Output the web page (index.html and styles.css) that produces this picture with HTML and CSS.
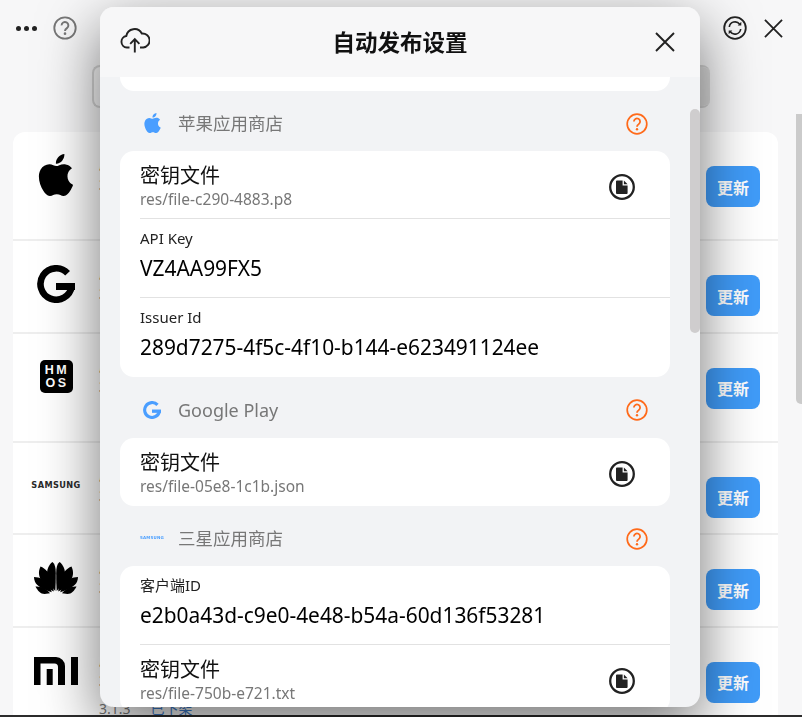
FILE: index.html
```html
<!DOCTYPE html>
<html lang="zh-CN">
<head>
<meta charset="utf-8">
<title>自动发布设置</title>
<link rel="stylesheet" href="styles.css">
</head>
<body>
<svg class="defs" width="0" height="0" aria-hidden="true">
  <defs>
    <symbol id="apple" viewBox="2 0 20 24"><path d="M12.152 6.896c-.948 0-2.415-1.078-3.96-1.04-2.04.027-3.91 1.183-4.961 3.014-2.117 3.675-.546 9.103 1.519 12.09 1.013 1.454 2.208 3.09 3.792 3.039 1.52-.065 2.09-.987 3.935-.987 1.831 0 2.35.987 3.96.948 1.637-.026 2.676-1.48 3.676-2.948 1.156-1.688 1.636-3.325 1.662-3.415-.039-.013-3.182-1.221-3.22-4.857-.026-3.04 2.48-4.494 2.597-4.559-1.429-2.09-3.623-2.324-4.39-2.376-2-.156-3.675 1.09-4.61 1.09zM15.53 3.83c.843-1.012 1.4-2.427 1.245-3.83-1.207.052-2.662.805-3.532 1.818-.78.896-1.454 2.338-1.273 3.714 1.338.104 2.715-.688 3.559-1.701"/></symbol>
    <symbol id="gee" viewBox="0 0 38 38"><path d="M30.6 8.2A15.7 15.7 0 1 0 34.7 21.5" fill="none" stroke="currentColor" stroke-width="6.6"/><path d="M19 18h19v7H19z"/></symbol>
    <symbol id="help" viewBox="0 0 22 22"><circle cx="11" cy="11" r="9.8" fill="none" stroke="currentColor" stroke-width="1.7"/><path d="M7.9 8.6a3.1 3.1 0 1 1 4.9 2.5c-1.1.8-1.8 1.3-1.8 2.6" fill="none" stroke="currentColor" stroke-width="1.8"/><circle cx="11" cy="16.2" r="1.2" fill="currentColor"/></symbol>
    <symbol id="file" viewBox="0 0 26 26"><circle cx="13" cy="13" r="11.8" fill="none" stroke="#222" stroke-width="2.3"/><path d="M8 6.500h5.600v5h5V19a1 1 0 0 1-1 1H8a1 1 0 0 1-1-1V7.500a1 1 0 0 1 1-1z" fill="#222"/><path d="M14.900 6.500l3.700 3.800h-3.700z" fill="#222"/></symbol>
    <symbol id="cross" viewBox="0 0 20 20"><path d="M1 1l18 18M19 1L1 19" fill="none" stroke="#222" stroke-width="1.9"/></symbol>
  </defs>
</svg>

<div class="app">
  <header class="topbar">
    <div class="topleft">
      <span class="dots"><i></i><i></i><i></i></span>
      <svg class="tophelp"><use href="#help"/></svg>
    </div>
    <div class="topright">
      <svg class="refresh" viewBox="0 0 24 24"><circle cx="12" cy="12" r="10.800" fill="none" stroke="#222" stroke-width="1.800"/><path d="M6.300 11a5.800 5.800 0 0 1 10.400-2.800M17.700 13a5.800 5.800 0 0 1-10.400 2.800" fill="none" stroke="#222" stroke-width="1.600"/><path d="M18.300 5.800v3.600h-3.600zM5.700 18.200v-3.600h3.600z" fill="#222"/></svg>
      <svg class="topclose"><use href="#cross"/></svg>
    </div>
  </header>
  <div class="searchbox"><div class="searchend"></div></div>
  <main class="list">
    <section class="item tall">
      <div class="brand"><svg class="b-apple"><use href="#apple"/></svg></div>
      <div class="info"><p>应用</p><p>3.1.3</p></div>
      <button class="update">更新</button>
    </section>
    <section class="item">
      <div class="brand"><svg class="b-gee"><use href="#gee"/></svg></div>
      <div class="info"><p>应用</p><p>3.1.3</p></div>
      <button class="update">更新</button>
    </section>
    <section class="item tall">
      <div class="brand"><div class="hmos"><span>HM</span><span>OS</span></div></div>
      <div class="info"><p>应用</p><p>3.1.3</p></div>
      <button class="update">更新</button>
    </section>
    <section class="item">
      <div class="brand"><span class="samsung">SAMSUNG</span></div>
      <div class="info"><p>应用</p><p>3.1.3</p></div>
      <button class="update">更新</button>
    </section>
    <section class="item">
      <div class="brand">
        <svg class="b-huawei" viewBox="0 0 44 32">
          <path d="M21.300 29C14.500 22 12 13.500 13.500 7.500 14.500 3.800 16.800 1 18.500 0c2.500 2 3.300 6 3.300 11 0 6-.1 12-.5 18z"/>
          <path d="M22.700 29C29.500 22 32 13.500 30.500 7.500 29.500 3.800 27.200 1 25.500 0c-2.500 2-3.300 6-3.300 11 0 6 .1 12 .5 18z"/>
          <path d="M19.700 29.500C11 25 5.500 18 5 12 4.800 9.500 5.300 7 6.500 4.500 11.500 6.500 15.500 11 17.300 16.500c1.400 4.500 2.400 9 2.400 13z"/>
          <path d="M24.300 29.500C33 25 38.500 18 39 12c.2-2.500-.3-5-1.500-7.500C32.500 6.500 28.500 11 26.700 16.500c-1.400 4.500-2.400 9-2.400 13z"/>
          <path d="M17.800 30.300C10 28 2.500 24 .9 19.500.3 18 0 16.500 0 15c5.500 0 10.800 2.800 13.800 6.800 1.800 2.500 3 5.500 4 8.500z"/>
          <path d="M26.200 30.300C34 28 41.500 24 43.100 19.500c.6-1.500.9-3 .9-4.500-5.500 0-10.800 2.800-13.800 6.800-1.800 2.500-3 5.500-4 8.500z"/>
          <path d="M1.500 24.500C7 24 12.500 27 16 31.200L10.500 32C6.500 32 3.500 28.500 1.500 24.500z"/>
          <path d="M42.500 24.500C37 24 31.500 27 28 31.200l5.500.8c4 0 7-3.500 9-7.500z"/>
        </svg>
      </div>
      <div class="info"><p>应用</p><p>3.1.3</p></div>
      <button class="update">更新</button>
    </section>
    <section class="item last">
      <div class="brand">
        <svg class="b-mi" viewBox="0 0 44 28"><path d="M0 0h22a9 9 0 0 1 9 9v19h-7V10a3.500 3.500 0 0 0-3.500-3.500H6.500V28H0zM12.700 12h6v16h-6zM37 0h7v28h-7z"/></svg>
      </div>
      <div class="info"><p>应用</p><p>3.1.3</p><p class="status"><span>3.1.3</span><em>已下架</em></p></div>
      <button class="update">更新</button>
    </section>
  </main>
  <div class="pagebar"></div>
</div>

<div class="modal">
  <header class="m-head">
    <svg class="m-cloud" viewBox="0 0 30 25">
      <path d="M9.500 19.500H6.800a5.800 5.800 0 0 1-.5-11.500A8.300 8.300 0 0 1 21.800 5.500a6.800 6.800 0 0 1 1.500 14h-3.300" fill="none" stroke="#222" stroke-width="1.900"/>
      <path d="M14.800 24.500V11.500M10.200 15.800l4.600-4.600 4.600 4.600" fill="none" stroke="#222" stroke-width="1.900"/>
    </svg>
    <h1>自动发布设置</h1>
    <svg class="m-close"><use href="#cross"/></svg>
  </header>
  <div class="m-body">
    <div class="stub"></div>

    <div class="store">
      <span class="store-logo"><svg class="s-apple"><use href="#apple"/></svg></span>
      <span class="store-name">苹果应用商店</span>
      <svg class="store-help"><use href="#help"/></svg>
    </div>
    <div class="card">
      <div class="row file">
        <div><div class="r-title">密钥文件</div><div class="r-path">res/file-c290-4883.p8</div></div>
        <svg class="r-icon"><use href="#file"/></svg>
      </div>
      <div class="row field"><div class="r-label">API Key</div><div class="r-value">VZ4AA99FX5</div></div>
      <div class="row field"><div class="r-label">Issuer Id</div><div class="r-value">289d7275-4f5c-4f10-b144-e623491124ee</div></div>
    </div>

    <div class="store wide">
      <span class="store-logo"><svg class="s-gee"><use href="#gee"/></svg></span>
      <span class="store-name latin">Google Play</span>
      <svg class="store-help"><use href="#help"/></svg>
    </div>
    <div class="card">
      <div class="row file">
        <div><div class="r-title">密钥文件</div><div class="r-path">res/file-05e8-1c1b.json</div></div>
        <svg class="r-icon"><use href="#file"/></svg>
      </div>
    </div>

    <div class="store">
      <span class="store-logo"><span class="s-samsung">SAMSUNG</span></span>
      <span class="store-name">三星应用商店</span>
      <svg class="store-help"><use href="#help"/></svg>
    </div>
    <div class="card">
      <div class="row field"><div class="r-label">客户端ID</div><div class="r-value">e2b0a43d-c9e0-4e48-b54a-60d136f53281</div></div>
      <div class="row file">
        <div><div class="r-title">密钥文件</div><div class="r-path">res/file-750b-e721.txt</div></div>
        <svg class="r-icon"><use href="#file"/></svg>
      </div>
    </div>
  </div>
  <div class="m-thumb"></div>
</div>
<div class="page-thumb"></div>
</body>
</html>
```

FILE: styles.css
```css
* { box-sizing: border-box; }
html, body { margin: 0; height: 100%; overflow: hidden; }
body {
  background: #f7f7f8;
  color: #000;
  font-family: "Noto Sans", "Noto Sans CJK SC", sans-serif;
}
.defs { position: absolute; }
svg { display: block; fill: currentColor; }

.app { height: 717px; display: flex; flex-direction: column; overflow: hidden; border-bottom: 2px solid #2c2c2c; }
.topbar { height: 65px; flex: none; padding: 0 19px 9px 16px; display: flex; align-items: center; justify-content: space-between; }
.topleft { display: flex; align-items: center; gap: 16px; }
.dots { display: flex; gap: 3px; }
.dots i { width: 5px; height: 5px; border-radius: 50%; background: #222; }
.tophelp { width: 24px; height: 24px; color: #777; }
.topright { display: flex; align-items: center; gap: 17px; }
.refresh { width: 24px; height: 24px; }
.topclose { width: 19px; height: 19px; }

.searchbox { flex: none; height: 43px; margin: 0 92px; border: 2px solid #d4d4d4; border-right: 0; border-radius: 8px; background: #f7f7f8; display: flex; justify-content: flex-end; overflow: hidden; }
.searchend { width: 40px; background: #dcdcdc; }
.list { flex: none; margin: 24px 24px 0 13px; background: #fff; border-radius: 12px 12px 0 0; }
.item { height: 92.500px; display: flex; align-items: flex-start; border-bottom: 2px solid #eee; position: relative; }
.item.tall { height: 109px; }
.item.last { height: 100px; border-bottom: 0; }
.brand { width: 86px; height: 86px; flex: none; display: flex; align-items: center; justify-content: center; color: #000; }
.b-apple { width: 36px; height: 42px; }
.b-gee { width: 38px; height: 38px; }
.hmos { width: 33px; height: 33px; border-radius: 5px; background: #000; color: #fff; display: flex; flex-direction: column; align-items: center; justify-content: center; font: 700 12.500px/13px "Liberation Sans", sans-serif; letter-spacing: 2.500px; padding-left: 2px; }
.samsung { font: 700 8.200px/1 "DejaVu Sans", sans-serif; letter-spacing: .4px; color: #2a2a2a; }
.b-huawei { width: 44px; height: 32px; }
.b-mi { width: 44px; height: 28px; margin-top: 1px; }
.info { flex: 1; padding-top: 21px; font-size: 14.500px; line-height: 21px; color: #222; }
.info p { margin: 0; }
.status { margin-top: 7px !important; font-size: 14px; color: #777; display: flex; gap: 20px; }
.status em { font-style: normal; color: #3f7fd0; }
.update { flex: none; margin: 34px 18px 0 0; width: 54px; height: 41px; border: 0; border-radius: 8px; background: #409cf9; color: #fff; font: 700 16px/40px "Noto Sans CJK SC", sans-serif; padding: 0; }
.pagebar { flex: 1; }

.modal { position: fixed; left: 100px; top: 7px; width: 600px; height: 700px; border-radius: 14px; background: #f2f3f5; box-shadow: 0 20px 60px rgba(0, 0, 0, .55); overflow: hidden; display: flex; flex-direction: column; }
.m-head { flex: none; height: 70px; background: #f7f7f8; display: flex; align-items: center; justify-content: space-between; padding: 2px 25px 4px 20px; }
.m-cloud { width: 30px; height: 25px; margin-top: -2px; }
.m-head h1 { margin: 0 0 0 -5px; font: 700 22.500px/30px "Noto Sans CJK SC", sans-serif; color: #111; }
.m-close { width: 20px; height: 20px; margin-top: 2px; }
.m-body { flex: 1; overflow: hidden; padding: 0 30px 0 20px; }
.stub { height: 14px; background: #fff; border-radius: 0 0 14px 14px; }
.store { height: 60px; display: flex; align-items: center; padding: 4px 22px 0 20px; color: #4a9eff; }
.store.wide { height: 61px; }
.store-logo { width: 24px; flex: none; display: flex; justify-content: center; margin-right: 14px; }
.s-apple { width: 17px; height: 20px; }
.s-gee { width: 18px; height: 18px; }
.s-samsung { font: 700 4px/1 "DejaVu Sans", sans-serif; letter-spacing: .2px; }
.store-name { flex: 1; font-size: 17.500px; line-height: 26px; color: #777; }
.store-name.latin { font-size: 18px; }
.store-help { width: 22px; height: 22px; color: #ff6a1a; margin-top: 1px; }
.card { background: #fff; border-radius: 14px; overflow: hidden; }
.row { margin-left: 20px; border-bottom: 1px solid #e2e2e2; }
.row:last-child { border-bottom: 0; }
.row.file { height: 68px; display: flex; align-items: flex-start; justify-content: space-between; padding: 11px 35px 0 0; }
.row.field { height: 79px; padding-top: 9px; }
.r-title { font-size: 20px; line-height: 27px; color: #111; }
.r-path { font-size: 15.500px; line-height: 20px; color: #777; }
.r-icon { width: 26px; height: 26px; margin-top: 12px; }
.r-label { font-size: 15px; line-height: 20px; color: #222; }
.r-value { font-size: 20.900px; line-height: 30px; margin-top: 5px; color: #000; }
.m-thumb { position: absolute; right: 0; top: 102px; width: 10px; height: 224px; border-radius: 5px; background: #cfcdce; }
.page-thumb { position: fixed; left: 796px; top: 114px; width: 6px; height: 290px; border-radius: 0 0 0 5px; background: #cbcbcb; }
```
